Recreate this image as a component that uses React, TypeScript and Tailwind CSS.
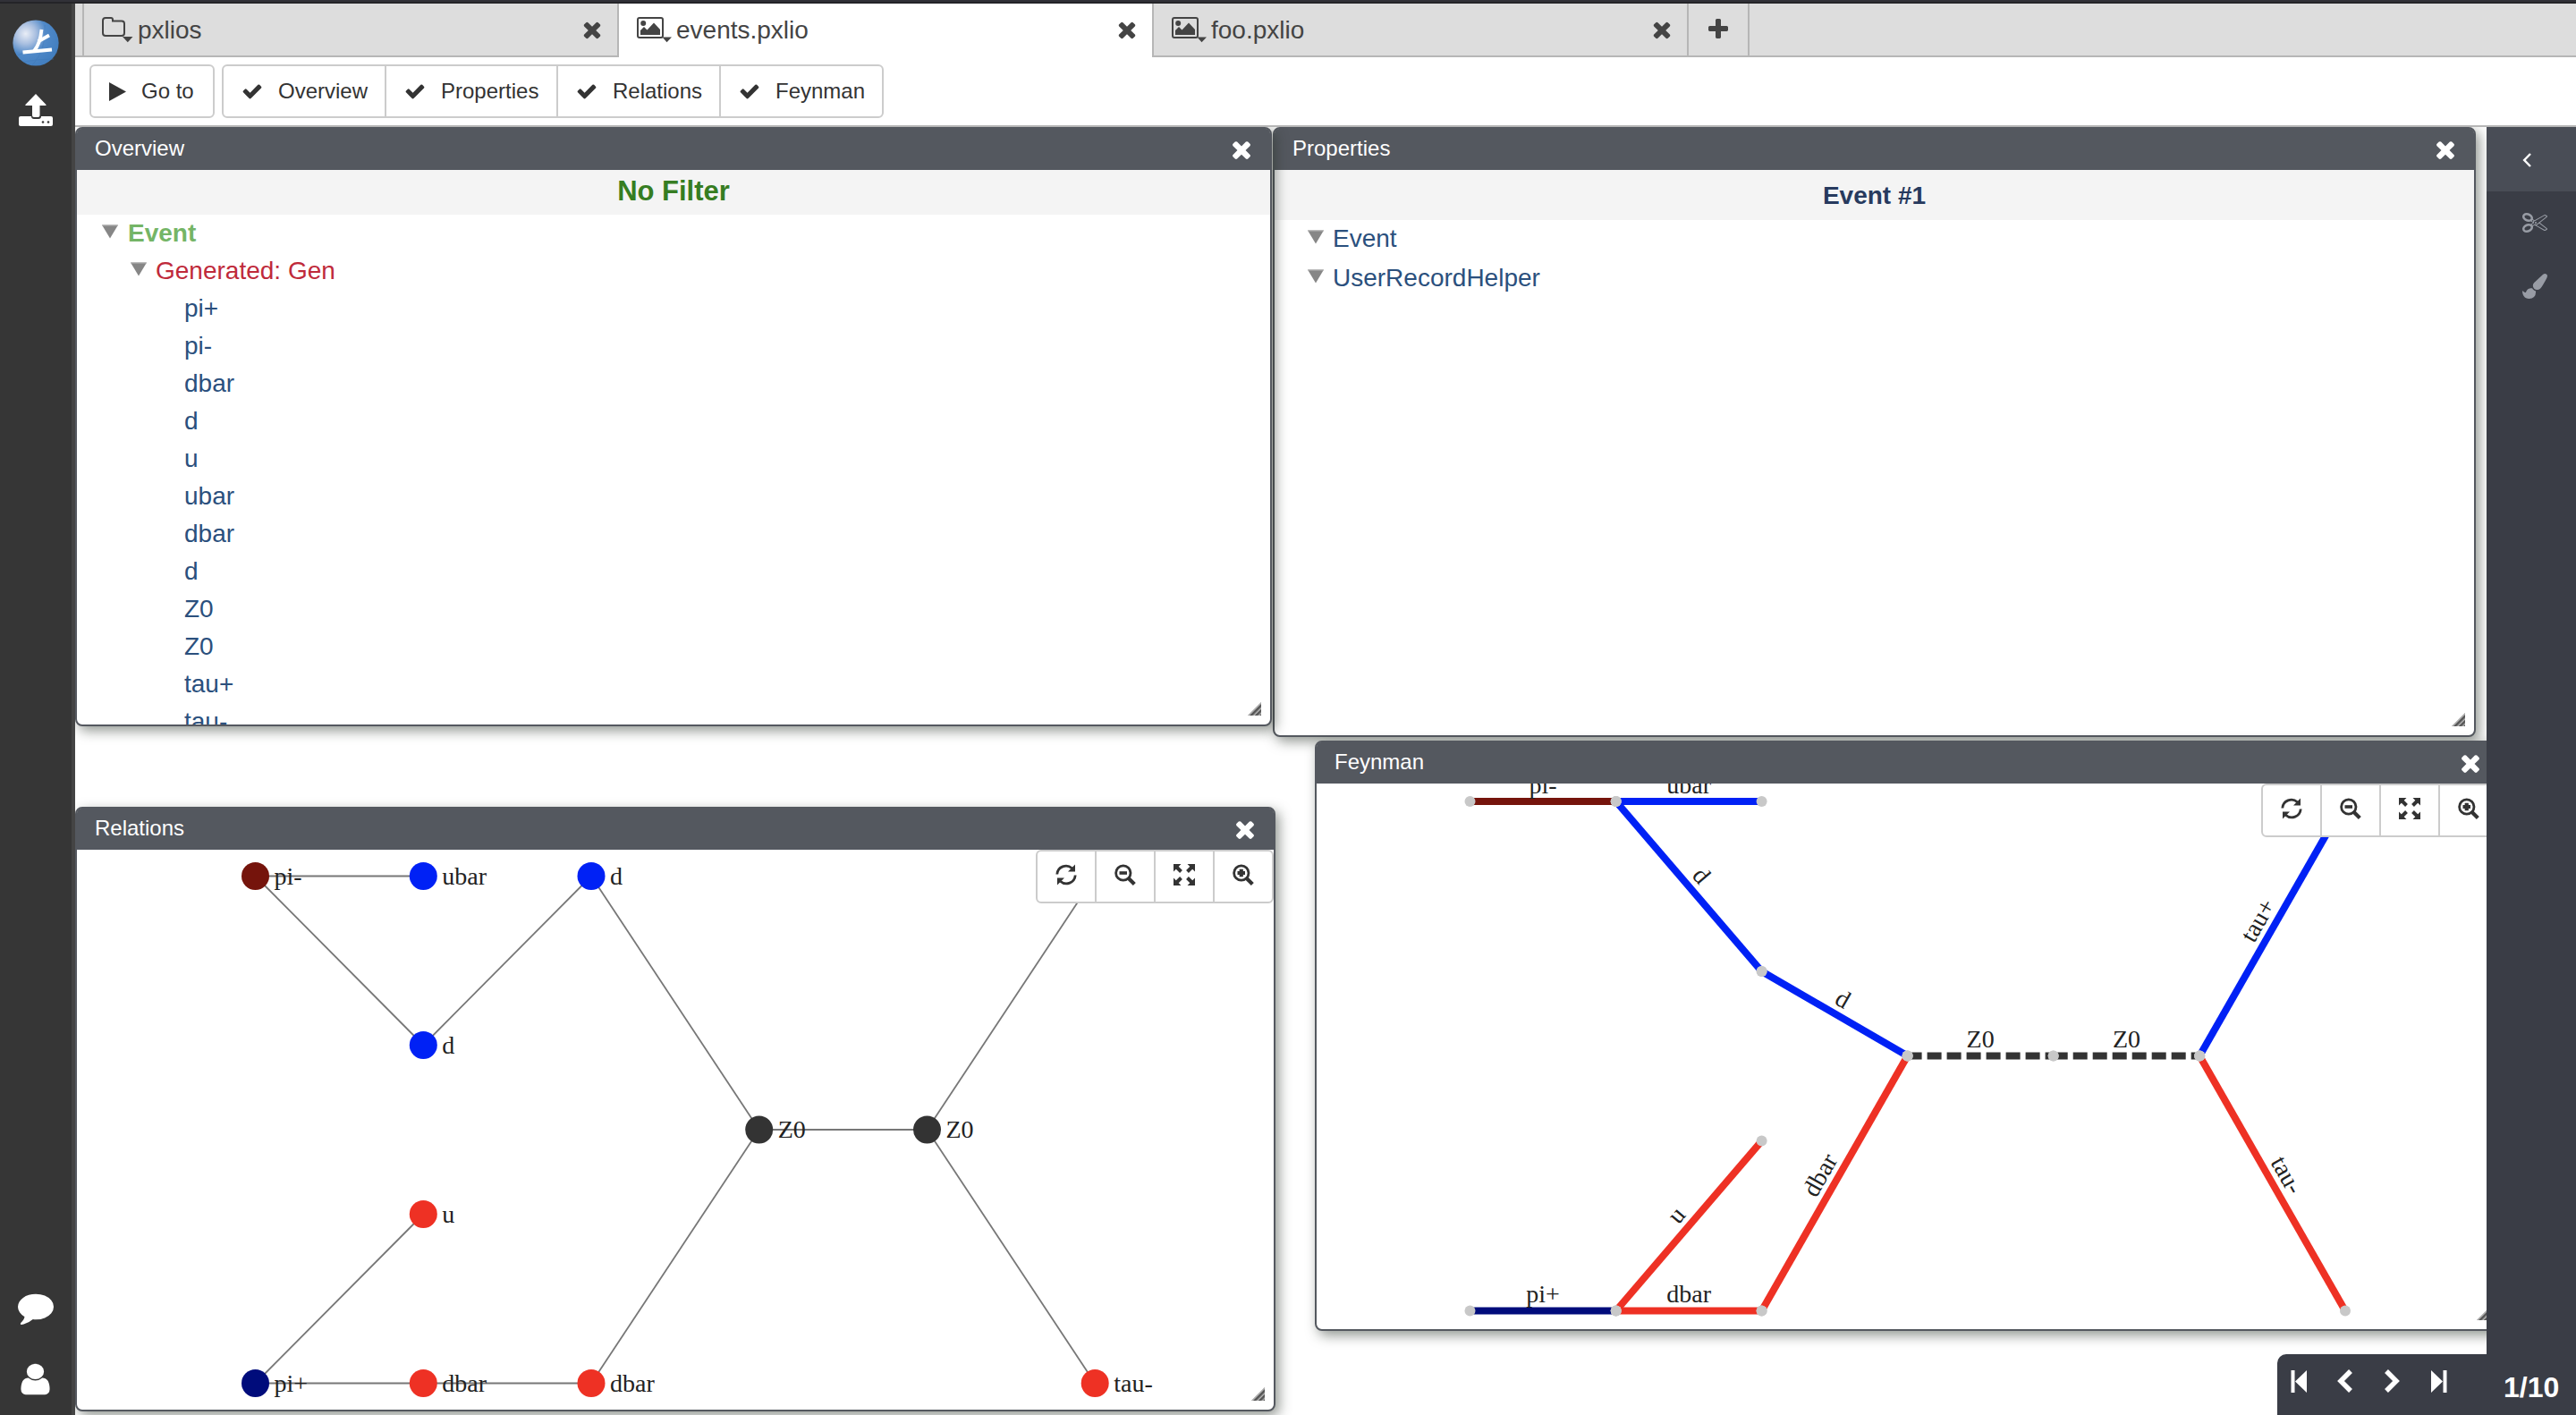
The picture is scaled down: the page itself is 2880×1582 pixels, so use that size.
import React from "react";

const ICONS = {
  times:
    "M1490 1322q0 40-28 68l-136 136q-28 28-68 28t-68-28l-294-294-294 294q-28 28-68 28t-68-28l-136-136q-28-28-28-68t28-68l294-294-294-294q-28-28-28-68t28-68l136-136q28-28 68-28t68 28l294 294 294-294q28-28 68-28t68 28l136 136q28 28 28 68t-28 68l-294 294 294 294q28 28 28 68z",
  plus: "M1600 736v192q0 40-28 68t-68 28h-416v416q0 40-28 68t-68 28h-192q-40 0-68-28t-28-68v-416h-416q-40 0-68-28t-28-68v-192q0-40 28-68t68-28h416v-416q0-40 28-68t68-28h192q40 0 68 28t28 68v416h416q40 0 68 28t28 68z",
  check:
    "M1671 566q0 40-28 68l-724 724-136 136q-28 28-68 28t-68-28l-136-136-362-362q-28-28-28-68t28-68l136-136q28-28 68-28t68 28l294 295 656-657q28-28 68-28t68 28l136 136q28 28 28 68z",
  comment:
    "M1792 896q0 174-120 321.5t-326 233-450 85.5q-70 0-145-8-198 175-460 242-49 14-114 22-17 2-30.5-9t-17.5-29v-1q-3-4-.5-12t2-10 4.5-9.5l6-9 7-8.5 8-9q7-8 31-34.5t34.5-38 31-39.5 32.5-51 27-59 26-76q-157-89-247.5-220t-90.5-281q0-130 71-248.5t191-204.5 286-136.5 348-50.5q244 0 450 85.5t326 233 120 321.5z",
  user: "M1536 1399q0 109-62.5 187t-150.5 78h-854q-88 0-150.5-78t-62.5-187q0-85 8.5-160.5t31.5-152 58.5-131 94-89 134.5-34.5q131 128 313 128t313-128q76 0 134.5 34.5t94 89 58.5 131 31.5 152 8.5 160.5zm-256-887q0 159-112.5 271.5t-271.5 112.5-271.5-112.5-112.5-271.5 112.5-271.5 271.5-112.5 271.5 112.5 112.5 271.5z",
  cut: "M960 896q26 0 45 19t19 45-19 45-45 19-45-19-19-45 19-45 45-19zm300 64l507 398q28 20 25 56-5 35-35 51l-128 64q-13 7-29 7-17 0-31-8l-690-387-110 66q-8 4-12 5 14 49 10 97-7 77-56 147.5t-132 123.5q-132 84-277 84-136 0-222-78-90-84-79-207 7-76 56-147t131-124q132-84 278-84 83 0 151 31 9-13 22-22l122-73-122-73q-13-9-22-22-68 31-151 31-146 0-278-84-82-53-131-124t-56-147q-5-59 15.5-113t63.5-93q85-79 222-79 145 0 277 84 83 52 132 123t56 148q4 48-10 97 4 1 12 5l110 66 690-387q14-8 31-8 16 0 29 7l128 64q30 16 35 51 3 36-25 56zm-681-260q46-42 21-108t-106-117q-92-59-192-59-74 0-113 36-46 42-21 108t106 117q92 59 192 59 74 0 113-36zm-85 745q81-51 106-117t-21-108q-39-36-113-36-100 0-192 59-81 51-106 117t21 108q39 36 113 36 100 0 192-59zm178-613l96 58v-11q0-36 33-56l14-8-79-44-26 26q-3 3-10 11t-12 12q-2 2-4 3.5t-3 2.5zm224 224l96 32 736-576-128-64-768 431v113l-160 96 9 8q2 2 7 6 4 4 11 12t11 12l26 26zm704 416l128-64-520-408-177 138q-2 3-13 7z",
  brush:
    "M1615 0q70 0 122.5 46.5t52.5 116.5q0 63-45 151-332 629-465 752-97 91-218 91-126 0-216.5-92.5t-90.5-219.5q0-128 92-212l638-579q59-54 130-54zm-909 1034q39 76 106.5 130t150.5 76l1 71q4 213-129.5 347t-348.5 134q-123 0-218-46.5t-152.5-127.5-86.5-183-29-220q7 5 41 30t62 44.5 59 36.5 46 17q41 0 55-37 25-66 57.5-112.5t69.5-76 88-47.5 103-25.5 125-10.5z",
};

interface IconProps {
  name: keyof typeof ICONS;
  className?: string;
}

const Icon = ({ name, className }: IconProps) => (
  <svg viewBox="0 0 1792 1792" preserveAspectRatio="none" fill="currentColor" className={`shrink-0 ${className ?? ""}`}>
    <path d={ICONS[name]} />
  </svg>
);

const Logo = () => (
  <svg viewBox="0 0 52 52" className="w-[52px] h-[52px]">
    <defs>
      <radialGradient id="ball" cx="0.28" cy="0.3" r="0.75">
        <stop offset="0" stopColor="#e9edf6" />
        <stop offset="0.3" stopColor="#a9bfe0" />
        <stop offset="0.6" stopColor="#5089c8" />
        <stop offset="1" stopColor="#437fc0" />
      </radialGradient>
    </defs>
    <circle cx="26" cy="26" r="25.6" fill="url(#ball)" />
    <g fill="none" stroke="#3f78b8" strokeWidth="0.7" opacity="0.6">
      <path d="M5 40 Q26 30 50 37" />
      <path d="M22 51 Q38 34 36 6" />
      <path d="M12 47 Q30 44 46 44" />
    </g>
    <g fill="none" stroke="#fff" strokeWidth="3.8">
      <path d="M11.5 36.5 L44 33.5" />
      <path d="M24 35 Q31 27 32.5 11" />
      <path d="M28.5 24.5 L41 17.5" />
    </g>
  </svg>
);

const UploadIcon = () => (
  <svg viewBox="0 0 38 36" className="w-[38px] h-[36px]">
    <path d="M2 25h12q0 3 3 3h5q3 0 3-3h11q2 0 2 2v7q0 2-2 2H2q-2 0-2-2v-7q0-2 2-2z" fill="#fff" />
    <path d="M19 0l11.5 12q.6 1-.6 1h-6.4v11q0 2-2 2h-4.5q-2 0-2-2v-11H8q-1.200 0-.6-1z" fill="#fff" />
    <circle cx="27" cy="31.500" r="1.300" fill="#363636" />
    <circle cx="33" cy="31.500" r="1.300" fill="#363636" />
  </svg>
);

const FolderIcon = () => (
  <svg viewBox="0 0 36 30" className="w-[36px] h-[30px] shrink-0">
    <path d="M1 4q0-3 3-3h6q2 0 2 2v1.500h10q3 0 3 3V18q0 3-3 3H4q-3 0-3-3z" fill="none" stroke="#444" strokeWidth="2" />
    <path d="M23 22h11.500l-5.700 6.300z" fill="#444" />
  </svg>
);

const PictureIcon = () => (
  <svg viewBox="0 0 40 30" className="w-[40px] h-[30px] shrink-0">
    <rect x="1" y="1" width="28" height="22" rx="2" fill="none" stroke="#444" strokeWidth="2" />
    <circle cx="7.200" cy="7" r="3" fill="#444" />
    <path d="M4 20v-5l4-4 3.500 3.500L19 6.500l7 7.500v6z" fill="#444" />
    <path d="M28.500 22.500h10.500l-5.500 5.800z" fill="#444" />
  </svg>
);

interface TabProps {
  label: string;
  folder?: boolean;
  active?: boolean;
}

const Tab = ({ label, folder, active }: TabProps) => (
  <div
    className={`flex items-center h-[60px] w-[598px] pl-[20px] pr-[14px] border-r-2 border-[#b6b6b6] text-[28px] text-[#444] ${
      active ? "bg-white pb-[2px]" : "bg-[#ddd] border-b-2"
    }`}
  >
    <div className="flex h-[30px] mt-[2px]">{folder ? <FolderIcon /> : <PictureIcon />}</div>
    <span className="grow leading-[32px] mt-px ml-[4px]">{label}</span>
    <Icon name="times" className="w-[28px] h-[28px]" />
  </div>
);

const views = [
  { name: "Overview", width: "w-[182px]" },
  { name: "Properties", width: "w-[192px]" },
  { name: "Relations", width: "w-[182px]" },
  { name: "Feynman", width: "w-[180px]" },
];

const Toolbar = () => (
  <div className="flex gap-[8px] h-[78px] pt-[8px] pl-[16px] bg-white border-b-2 border-[#b6b6b6] text-[24px] text-[#333]">
    <div className="flex items-center w-[140px] h-[60px] pl-[20px] border-2 border-[#ccc] rounded-[6px]">
      <svg viewBox="0 0 19 21" className="w-[19px] h-[21px] mr-[17px]">
        <path d="M0 0L19 10.500L0 21z" fill="#333" />
      </svg>
      <span>Go to</span>
    </div>
    <div className="flex h-[60px] border-2 border-[#ccc] rounded-[6px]">
      {views.map((v, i) => (
        <div key={v.name} className={`flex items-center pl-[20px] ${v.width} ${i < 3 ? "border-r-2 border-[#ccc]" : ""}`}>
          <Icon name="check" className="w-[24px] h-[24px] mr-[17px]" />
          <span>{v.name}</span>
        </div>
      ))}
    </div>
  </div>
);

const Grip = () => (
  <svg viewBox="0 0 16 16" className="absolute right-[9px] bottom-[9px] w-[16px] h-[16px]">
    <defs>
      <pattern id="grip" width="4" height="4" patternUnits="userSpaceOnUse" patternTransform="rotate(45)">
        <rect width="4" height="4" fill="#bbb" />
        <rect width="2.600" height="4" fill="#555" />
      </pattern>
    </defs>
    <path d="M0 15L15 0V15z" fill="url(#grip)" />
  </svg>
);

interface PanelProps {
  title: string;
  className: string;
  children: React.ReactNode;
}

const Panel = ({ title, className, children }: PanelProps) => (
  <div
    className={`absolute flex flex-col border-2 border-[#54585f] rounded-[8px] bg-white shadow-[4px_5px_14px_rgba(40,50,40,0.5)] ${className}`}
  >
    <div className="flex items-center justify-between h-[46px] shrink-0 pl-[20px] pr-[17px] pb-[2px] bg-[#54585f] text-white text-[24px] rounded-t-[5px]">
      <span className="leading-[44px]">{title}</span>
      <Icon name="times" className="w-[30px] h-[30px] mt-px" />
    </div>
    <div className="relative grow overflow-hidden rounded-b-[6px]">
      {children}
      <Grip />
    </div>
  </div>
);

const Caret = () => (
  <svg viewBox="0 0 18 16" className="w-[18px] h-[16px] shrink-0">
    <path d="M0 0.500H18L9 15.500z" fill="#868686" />
    <path d="M0 0.500H18L17.500 1.500H0.500z" fill="#b4b4b4" />
  </svg>
);

const particles = ["pi+", "pi-", "dbar", "d", "u", "ubar", "dbar", "d", "Z0", "Z0", "tau+", "tau-"];

const Overview = () => (
  <Panel title="Overview" className="left-0 top-0 w-[1338px] h-[670px]">
    <div className="h-[50px] bg-[#f4f4f4] text-center text-[31px] leading-[48px] font-bold text-[#367d22]">No Filter</div>
    <div className="text-[28px] leading-[42px] text-[#2b507d]">
      <div className="flex pl-[28px] h-[42px] text-[#74b566] font-bold">
        <div className="pt-[11px] mr-[11px]">
          <Caret />
        </div>
        Event
      </div>
      <div className="flex pl-[60px] h-[42px] text-[#bf2a3b]">
        <div className="pt-[11px] mr-[10px]">
          <Caret />
        </div>
        Generated: Gen
      </div>
      {particles.map((p, i) => (
        <div key={i} className="h-[42px] pl-[120px]">
          {p}
        </div>
      ))}
    </div>
  </Panel>
);

const Properties = () => (
  <Panel title="Properties" className="left-[1339px] top-0 w-[1345px] h-[682px]">
    <div className="h-[56px] bg-[#f4f4f4] text-center text-[28px] leading-[57px] font-bold text-[#273a5e]">Event #1</div>
    <div className="text-[28px] leading-[44px] text-[#2b507d]">
      {["Event", "UserRecordHelper"].map((t) => (
        <div key={t} className="flex h-[44px] pl-[37px]">
          <div className="pt-[11px] mr-[10px]">
            <Caret />
          </div>
          <span className="-mt-px">{t}</span>
        </div>
      ))}
    </div>
  </Panel>
);

const ZoomBar = () => (
  <div className="absolute right-0 top-0 flex h-[60px] border-2 border-[#ccc] rounded-[6px] bg-white text-[#333]">
    <div className="flex justify-center pt-[14px] w-[66px] border-r-2 border-[#ccc]">
      <svg viewBox="0 0 24 24" className="w-[24px] h-[24px]">
        <path d="M1.800 11.500A10 10 0 0 1 18.500 4.800M22.200 12.500A10 10 0 0 1 5.500 19.200" fill="none" stroke="currentColor" strokeWidth="2.800" />
        <path d="M22 0.500V8.500H14zM2 23.500V15.500H10z" fill="currentColor" />
      </svg>
    </div>
    <div className="flex justify-center pt-[14px] w-[66px] border-r-2 border-[#ccc]">
      <svg viewBox="0 0 24 24" className="w-[24px] h-[24px]">
        <circle cx="9.800" cy="10" r="8.200" fill="none" stroke="currentColor" strokeWidth="2.800" />
        <path d="M15.500 15.700L22.300 22.500" stroke="currentColor" strokeWidth="4.200" />
        <rect x="5.500" y="8.200" width="8.500" height="3.600" fill="currentColor" />
      </svg>
    </div>
    <div className="flex justify-center pt-[14px] w-[66px] border-r-2 border-[#ccc]">
      <svg viewBox="0 0 24 24" className="w-[24px] h-[24px]">
        <path d="M0 0H8.500L0 8.500zM24 0H15.500L24 8.500zM0 24H8.500L0 15.500zM24 24H15.500L24 15.500z" fill="currentColor" />
        <path d="M3 3L8.500 8.500M21 3L15.500 8.500M3 21L8.500 15.500M21 21L15.500 15.500" stroke="currentColor" strokeWidth="4" />
      </svg>
    </div>
    <div className="flex justify-center pt-[14px] w-[64px]">
      <svg viewBox="0 0 24 24" className="w-[24px] h-[24px]">
        <circle cx="9.800" cy="10" r="8.200" fill="none" stroke="currentColor" strokeWidth="2.800" />
        <path d="M15.500 15.700L22.300 22.500" stroke="currentColor" strokeWidth="4.200" />
        <path d="M5.500 10H14M9.750 5.750V14.250" stroke="currentColor" strokeWidth="4.200" />
      </svg>
    </div>
  </div>
);

const nodes = [
  { x: 199.5, y: 29.5, label: "pi-", color: "#75140c" },
  { x: 387.3, y: 29.5, label: "ubar", color: "#0021f5" },
  { x: 575, y: 29.5, label: "d", color: "#0021f5" },
  { x: 387.3, y: 218.5, label: "d", color: "#0021f5" },
  { x: 387.3, y: 407.5, label: "u", color: "#ee3124" },
  { x: 199.5, y: 596.5, label: "pi+", color: "#000c7b" },
  { x: 387.3, y: 596.5, label: "dbar", color: "#ee3124" },
  { x: 575, y: 596.5, label: "dbar", color: "#ee3124" },
  { x: 762.7, y: 313, label: "Z0", color: "#333" },
  { x: 950.5, y: 313, label: "Z0", color: "#333" },
  { x: 1138.2, y: 596.5, label: "tau-", color: "#ee3124" },
  { x: 1138.2, y: 29.5, label: "tau+", color: "#0021f5" },
];

const links = [
  [0, 1], [0, 3], [3, 2], [2, 8], [8, 9], [9, 11], [9, 10], [7, 8], [5, 4], [5, 6], [6, 7],
];

const Relations = () => (
  <Panel title="Relations" className="left-0 top-[760px] w-[1342px] h-[676px]">
    <svg width="1338" height="626" viewBox="0 0 1338 626" className="block font-['Liberation_Serif',serif]">
      {links.map(([a, b]) => (
        <line key={`${a}-${b}`} x1={nodes[a].x} y1={nodes[a].y} x2={nodes[b].x} y2={nodes[b].y} stroke="#777" strokeWidth="1.800" />
      ))}
      {nodes.map((n, i) => (
        <g key={i}>
          <circle cx={n.x} cy={n.y} r="15.500" fill={n.color} />
          <text x={n.x + 21} y={n.y + 9} fontSize="28" fill="#222">
            {n.label}
          </text>
        </g>
      ))}
    </svg>
    <ZoomBar />
  </Panel>
);

const X = [171.5, 334.7, 497.6, 660.6, 823.7, 987.2, 1150];
const Y = [20, 210, 304.5, 399.6, 589.5];

// from column, from row, to column, to row
const edges = [
  { p: [0, 0, 1, 0], label: "pi-", color: "#75140c" },
  { p: [1, 0, 2, 0], label: "ubar", color: "#0021f5" },
  { p: [1, 0, 2, 1], label: "d", color: "#0021f5" },
  { p: [2, 1, 3, 2], label: "d", color: "#0021f5" },
  { p: [3, 2, 4, 2], label: "Z0", color: "#333", dashed: true },
  { p: [4, 2, 5, 2], label: "Z0", color: "#333", dashed: true },
  { p: [5, 2, 6, 0], label: "tau+", color: "#0021f5" },
  { p: [5, 2, 6, 4], label: "tau-", color: "#ee3124" },
  { p: [2, 4, 3, 2], label: "dbar", color: "#ee3124" },
  { p: [1, 4, 2, 3], label: "u", color: "#ee3124" },
  { p: [1, 4, 2, 4], label: "dbar", color: "#ee3124" },
  { p: [0, 4, 1, 4], label: "pi+", color: "#000c7b" },
];

const Feynman = () => (
  <Panel title="Feynman" className="left-[1386px] top-[686px] w-[1326px] h-[660px]">
    <svg width="1322" height="610" viewBox="0 0 1322 610" className="block font-['Liberation_Serif',serif]">
      {edges.map((e, i) => (
        <line
          key={i}
          x1={X[e.p[0]]}
          y1={Y[e.p[1]]}
          x2={X[e.p[2]]}
          y2={Y[e.p[3]]}
          stroke={e.color}
          strokeWidth="8"
          strokeDasharray={e.dashed ? "16 6" : undefined}
        />
      ))}
      {edges.map((e, i) => (
        <g key={i}>
          <circle cx={X[e.p[0]]} cy={Y[e.p[1]]} r="6" fill="#c8c8c8" />
          <circle cx={X[e.p[2]]} cy={Y[e.p[3]]} r="6" fill="#c8c8c8" />
        </g>
      ))}
      {edges.map((e, i) => {
        const [x1, y1, x2, y2] = [X[e.p[0]], Y[e.p[1]], X[e.p[2]], Y[e.p[3]]];
        const angle = (Math.atan2(y2 - y1, x2 - x1) * 180) / Math.PI;
        return (
          <text
            key={i}
            y="-9.500"
            textAnchor="middle"
            fontSize="28"
            fill="#222"
            transform={`translate(${(x1 + x2) / 2} ${(y1 + y2) / 2}) rotate(${angle})`}
          >
            {e.label}
          </text>
        );
      })}
    </svg>
    <ZoomBar />
  </Panel>
);

const Pager = () => (
  <div className="absolute right-0 bottom-0 flex w-[334px] h-[68px] pl-[15px] pt-[16px] bg-[#3a3d46] rounded-tl-[10px] text-white">
    <svg viewBox="0 0 176 28" className="w-[176px] h-[28px] shrink-0">
      <path d="M0.500 2h4v25h-4zM18 2v25L5 14.500z" fill="currentColor" />
      <path d="M67 3L56 14L67 25" fill="none" stroke="currentColor" strokeWidth="5.500" />
      <path d="M107 3L118 14L107 25" fill="none" stroke="currentColor" strokeWidth="5.500" />
      <path d="M157 2v25l13-12.500zM170.500 2h4v25h-4z" fill="currentColor" />
    </svg>
    <span className="ml-[62px] mt-[3px] text-[32px] leading-[36px] font-bold">1/10</span>
  </div>
);

const App = () => {
  return (
    <div className="relative flex flex-col w-[2880px] h-[1582px] overflow-hidden bg-white font-['Liberation_Sans',Arial,sans-serif]">
      <div className="h-[4px] shrink-0 bg-[#313138] border-b-2 border-[#242428]" />
      <div className="flex grow min-h-0">
        <div className="flex flex-col items-center w-[84px] shrink-0 bg-[#363636] border-r-4 border-[#444] text-white">
          <div className="mt-[18px]">
            <Logo />
          </div>
          <div className="mt-[31px]">
            <UploadIcon />
          </div>
          <div className="grow" />
          <Icon name="comment" className="w-[40px] h-[40px]" />
          <Icon name="user" className="w-[45px] h-[40px] mt-[41px] mb-[20px] mr-px" />
        </div>
        <div className="flex flex-col grow min-w-0">
          <div className="flex h-[60px] shrink-0">
            <div className="w-[10px] bg-[#ddd] border-r-2 border-b-2 border-[#b6b6b6]" />
            <Tab label="pxlios" folder />
            <Tab label="events.pxlio" active />
            <Tab label="foo.pxlio" />
            <div className="flex items-center justify-center w-[68px] bg-[#ddd] border-r-2 border-b-2 border-[#b6b6b6] text-[#444]">
              <Icon name="plus" className="w-[28px] h-[28px]" />
            </div>
            <div className="grow bg-[#ddd] border-b-2 border-[#b6b6b6]" />
          </div>
          <Toolbar />
          <div className="flex grow min-h-0">
            <div className="relative grow overflow-hidden">
              <Properties />
              <Overview />
              <Relations />
              <Feynman />
            </div>
            <div className="flex flex-col w-[100px] shrink-0 bg-[#3a3d46] text-[#989ca5]">
              <div className="h-[72px] pl-[40px] pt-[29px] bg-[#494d56]">
                <svg viewBox="0 0 11 16" className="w-[11px] h-[16px]">
                  <path d="M9 1L2.200 8L9 15" fill="none" stroke="#fff" strokeWidth="2.500" />
                </svg>
              </div>
              <Icon name="cut" className="w-[28px] h-[28px] ml-[40px] mt-[20px]" />
              <Icon name="brush" className="w-[28px] h-[28px] ml-[40px] mt-[44px]" />
            </div>
          </div>
        </div>
      </div>
      <Pager />
    </div>
  );
};

export default App;
